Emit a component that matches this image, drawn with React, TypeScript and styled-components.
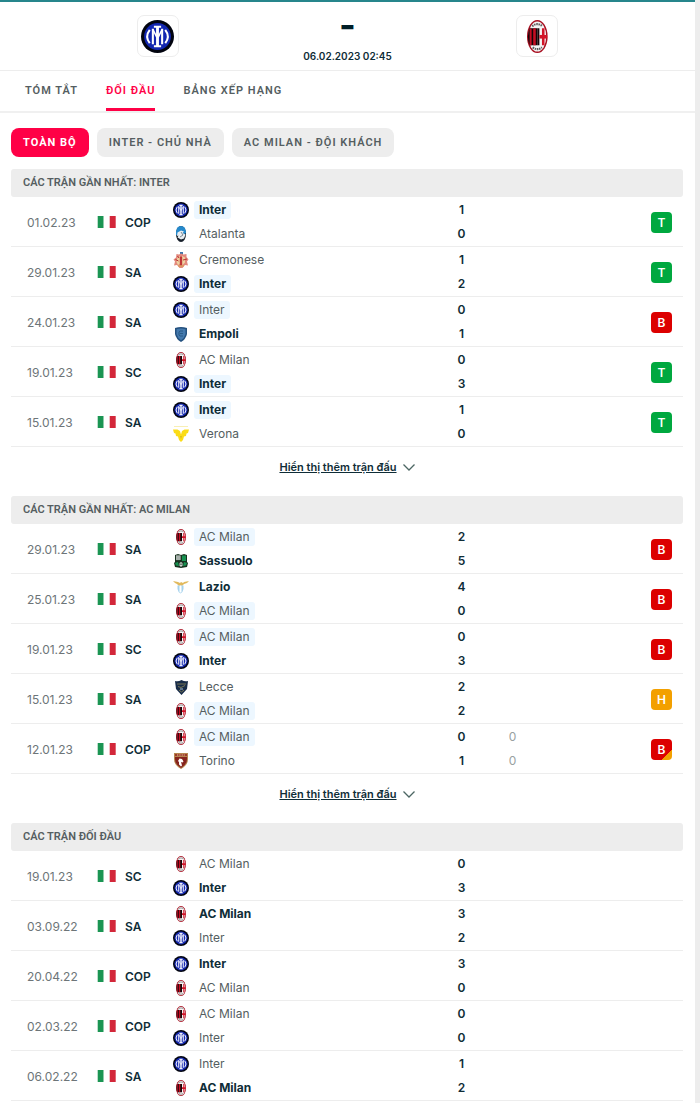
import React from 'react';
import styled, { createGlobalStyle, css } from 'styled-components';

const GlobalStyle = createGlobalStyle`
  * { box-sizing: border-box; }
  body {
    margin: 0;
    background: #ededed;
    color: #0f2d37;
    font-family: Inter, "Liberation Sans", sans-serif;
    font-size: 12px;
  }
`;

const capsFont = 'Roboto, Inter, sans-serif';

const Page = styled.main`
  margin-right: 5px;
  background: #fff;
  border-top: 2px solid #26868c;
  padding-bottom: 2px;
`;

const Header = styled.header`
  display: grid;
  grid-template-columns: repeat(3, 1fr);
  justify-items: center;
  padding: 13px 9%;
  border-bottom: 1px solid #ededed;
`;

const CrestBox = styled.div`
  display: grid;
  place-items: center;
  width: 42px;
  height: 42px;
  border: 1px solid #ededed;
  border-radius: 7px;
`;

const Kickoff = styled.div`
  display: flex;
  flex-direction: column;
  align-items: center;
  justify-content: space-between;
  height: 48px;
  margin-bottom: -6px;
`;

const Score = styled.div`
  font-size: 36px;
  font-weight: 700;
  line-height: 20px;
  color: #001e28;
`;

const StartTime = styled.time`
  font-size: 10px;
  font-weight: 600;
  line-height: 14px;
  white-space: nowrap;
`;

const Tabs = styled.nav`
  display: flex;
  gap: 28px;
  padding: 0 25px;
  border-bottom: 2px solid #f0f0f0;
`;

const Tab = styled.a<{ $active?: boolean }>`
  height: 40px;
  font-family: ${capsFont};
  font-size: 11px;
  font-weight: 600;
  line-height: 40px;
  letter-spacing: 1px;
  text-decoration: none;
  white-space: nowrap;
  color: ${p => (p.$active ? '#ff0046' : '#555e61')};
  ${p => p.$active && css`box-shadow: inset 0 -3px #ff0046;`}
`;

const Filters = styled.div`
  display: flex;
  gap: 8px;
  padding: 15px 11px 12px;
`;

const FilterButton = styled.button<{ $active?: boolean }>`
  height: 29px;
  padding: 0 12px;
  border: 0;
  border-radius: 8px;
  font-family: ${capsFont};
  font-size: 11px;
  font-weight: ${p => (p.$active ? 700 : 600)};
  letter-spacing: 1px;
  white-space: nowrap;
  color: ${p => (p.$active ? '#fff' : '#555e61')};
  background: ${p => (p.$active ? '#ff0046' : '#ededed')};
`;

const Section = styled.section`
  padding: 0 12px 0 11px;
`;

const SectionTitle = styled.h2`
  margin: 0;
  padding: 0 12px;
  border-radius: 3px;
  background: #ededed;
  color: #555e61;
  font-family: ${capsFont};
  font-size: 11px;
  font-weight: 600;
  line-height: 28px;
`;

const MatchTable = styled.table`
  width: 100%;
  table-layout: fixed;
  border-collapse: separate;
  border-spacing: 0;
`;

const DateCol = styled.col` width: 86px; `;
const LeagueCol = styled.col` width: 76px; `;
const ScoreCol = styled.col` width: 51px; `;
const ResultCol = styled.col` width: 145px; `;

const Cell = styled.td`
  height: 50px;
  padding: 1px 0 0;
  border-bottom: 1px solid #ededed;
  vertical-align: middle;
`;

const DateCell = styled(Cell)`
  padding-left: 16px;
  color: #6d7578;
`;

const ScoreCell = styled(Cell)<{ $muted?: boolean }>`
  text-align: center;
  font-weight: ${p => (p.$muted ? 400 : 600)};
  color: ${p => (p.$muted ? '#999fa1' : '#0f2d37')};
`;

const ResultCell = styled(Cell)`
  padding-right: 11px;
`;

const League = styled.div`
  display: flex;
  align-items: center;
  gap: 9px;
  font-weight: 600;
`;

const TeamLine = styled.div`
  display: flex;
  align-items: center;
  gap: 5px;
  height: 24px;
`;

const ScoreLine = styled.div`
  height: 24px;
  line-height: 24px;
`;

const TeamName = styled.span<{ $winner: boolean; $highlight: boolean }>`
  padding: 0 5px;
  border-radius: 3px;
  line-height: 18px;
  font-weight: ${p => (p.$winner ? 700 : 400)};
  color: ${p => (p.$winner ? '#0f2d37' : '#555e61')};
  background: ${p => (p.$highlight ? '#edf7ff' : 'transparent')};
`;

const badgeColors = { T: '#00a83f', B: '#dc0000', H: '#f3a000' };

const ResultBadge = styled.div<{ $result: Result; $extra?: boolean }>`
  width: 21px;
  height: 21px;
  margin-left: auto;
  border-radius: 4px;
  color: #fff;
  font-size: 12px;
  font-weight: 600;
  line-height: 21px;
  text-align: center;
  background: ${p =>
    p.$extra
      ? `linear-gradient(135deg, ${badgeColors[p.$result]} 75%, ${badgeColors.H} 75%)`
      : badgeColors[p.$result]};
`;

const MoreRow = styled.div`
  display: flex;
  justify-content: center;
  padding: 10px 0 19px;
`;

const MoreButton = styled.button`
  display: flex;
  align-items: center;
  gap: 6px;
  height: 20px;
  padding: 0;
  border: 0;
  background: none;
  color: #0f2d37;
  font-family: inherit;
  font-size: 11px;
  font-weight: 600;
  text-decoration: underline;
`;

const Slot = styled.span`
  display: grid;
  place-items: center;
  width: 16px;
  height: 18px;
`;

function InterCrest({ size }: { size: number }) {
  return (
    <svg width={size} height={size} viewBox="0 0 32 32" aria-hidden="true">
      <circle cx="16" cy="16" r="16" fill="#02040f" />
      <circle cx="16" cy="16" r="13" fill="#1226b0" />
      <g fill="none" stroke="#fff" strokeWidth="2">
        <path d="M16 6v20" strokeWidth="2.8" />
        <path d="M12.5 6.500h7M12.500 25.500h7" />
        <path d="M11.500 8.500v15M20.500 8.500v15" />
        <path d="M11.500 9l4 8M20.500 9l-4 8" strokeWidth="1.500" />
        <path d="M8.500 9.500q-5 6.500 0 13M23.500 9.500q5 6.500 0 13" />
      </g>
    </svg>
  );
}

function MilanCrest({ size }: { size: number }) {
  return (
    <svg width={(size * 20) / 32} height={size} viewBox="0 0 20 32" aria-hidden="true">
      <ellipse cx="10" cy="16" rx="10" ry="16" fill="#a80f20" />
      <ellipse cx="10" cy="16" rx="8.600" ry="14.600" fill="#f4f4f4" />
      <path d="M2.500 8H10v16.500H2.500Q-.8 16 2.500 8Z" fill="#160508" />
      <path d="M2.500 8.500h2v16h-2zM6 8h2.500v16.500H6z" fill="#c40d22" />
      <path d="M10 8h2v16.500h-2z" fill="#160508" />
      <path d="M14.500 8h2.500v16.500h-2.500z" fill="#d21428" />
      <path d="M12 14.500h7.500v3.500H12z" fill="#d21428" />
      <path d="M5 6q5-4 10 0M5.500 26.500q4.500 3.500 9 0" fill="none" stroke="#5b5b5b" strokeWidth="2" strokeDasharray="1.500 .7" />
    </svg>
  );
}

function AtalantaCrest() {
  return (
    <svg width="10" height="16" viewBox="0 0 10 16" aria-hidden="true">
      <ellipse cx="5" cy="8" rx="5" ry="8" fill="#17202b" />
      <path d="M0 9V6q.5-6 5-6t5 6v1L5 10Z" fill="#2589cc" />
      <path d="M1.500 6.500l3.500-2 3 1-1.500 1.500 3 1.500-1.500 4-3 1-3.500-2 1-2-1.500.5Z" fill="#e8edf1" />
      <path d="M5 6l2 3-3 2" fill="none" stroke="#61717d" strokeWidth=".8" />
    </svg>
  );
}

function CremoneseCrest() {
  return (
    <svg width="16" height="16" viewBox="0 0 16 16" aria-hidden="true">
      <path d="M7 0h3v3H7z" fill="#3d75aa" />
      <path d="M8 1.500l2.500 1 3-.5v3l2 2.500-1.500 2 1 4-3-.5L9.500 16h-3L4 13l-3 .5 1-4L.5 7.500 3 5.500 3.500 2l2.500.5Z" fill="#e2897d" />
      <path d="M4.500 5.500L7 4v8l-2 1-1.500-3ZM9 4l3 1.500v5L9 13.500Z" fill="#eed3a0" />
      <path d="M7.300 5h1.400v8H7.300zM2.500 7.500l3 1.500M10 8l4-1M4.500 4l1.500 2" fill="#bd3033" stroke="#bd3033" />
      <path d="M5 14h6" stroke="#d6a250" />
    </svg>
  );
}

function EmpoliCrest() {
  return (
    <svg width="12" height="15" viewBox="0 0 12 15" aria-hidden="true">
      <path d="M0 1q6-2 12 0v6q-1 5-6 8-5-3-6-8Z" fill="#24517f" />
      <path d="M1.500 2.200q4.500-1.400 9 0V7q-1 4-4.500 6.200Q2.500 11 1.500 7Z" fill="#4479ad" />
      <path d="M8 4H5L4 5v3l1 1h3M5 6.500h3" fill="none" stroke="#23547f" strokeWidth=".8" />
    </svg>
  );
}

function VeronaCrest() {
  return (
    <svg width="16" height="16" viewBox="0 0 16 16" aria-hidden="true">
      <path d="M1 .5h14" stroke="#f8efb5" />
      <path d="M0 3.500h4.500L7 5l1 3.500L9 5l2.500-1.500H16L15 7l-1.500.5-.5 2.500-2 .5L10 14l-2 2-2-2-1-3.500-2-.5-.5-2.500L1 7Z" fill="#fbdc16" />
      <path d="M7 10l1 3 1-3" fill="#d8bb1c" />
    </svg>
  );
}

function SassuoloCrest() {
  return (
    <svg width="14" height="14" viewBox="0 0 14 14" aria-hidden="true">
      <path d="M1 1l3-1 3 1 3-1 3 1v7l1 1-1 4-6 1-6-1-1-4 1-1Z" fill="#18311f" />
      <path d="M2 1.500h4.500V6H2z" fill="#dce2df" />
      <path d="M3 2v5M5 2v5" stroke="#46544b" strokeWidth=".7" />
      <path d="M8 1.500h4V7H8zM1 9l3-1 1 4-3-.5ZM13 9l-3-1-1 4 3-.5Z" fill="#169150" />
      <path d="M5.500 9l1.500-1 1.500 1v2.500L7 13l-1.500-1.500Z" fill="#cad5ce" />
      <path d="M6.500 9.500h1v1.500h-1z" fill="#18311f" />
    </svg>
  );
}

function LazioCrest() {
  return (
    <svg width="16" height="14" viewBox="0 0 16 14" aria-hidden="true">
      <path d="M0 1l5 1 2 1 1-1 2 1 1-1 5-1-2 2-3 1-2 2H6L4 4 2 3Z" fill="#e1b95c" />
      <path d="M4.500 5.500h6V9q-.5 3-3 4.500Q5 12 4.500 9Z" fill="#a5d2ed" />
      <path d="M6.500 5.500h2v6.500l-1 .8-1-.8Z" fill="#fff" />
    </svg>
  );
}

function LecceCrest() {
  return (
    <svg width="13" height="15" viewBox="0 0 13 15" aria-hidden="true">
      <path d="M0 1q3 1 6.500-1Q10 2 13 1l-1 8-5.500 6L1 9Z" fill="#182c49" />
      <path d="M2 4h9M3 6.500l3 1 4-2M4 10l2.500 2L9 10" fill="none" stroke="#a2965c" strokeWidth=".7" />
      <path d="M5 8h3v2H5z" fill="#61758d" />
    </svg>
  );
}

function TorinoCrest() {
  return (
    <svg width="14" height="16" viewBox="0 0 14 16" aria-hidden="true">
      <path d="M0 0h14v6q0 6-7 10Q0 12 0 6Z" fill="#b6854f" />
      <path d="M1 4h12v2q0 5.500-6 9-6-3.500-6-9Z" fill="#86231e" />
      <path d="M1 1h12v2H1z" fill="#9c3c2a" />
      <path d="M3 2h8" stroke="#e3c79d" strokeDasharray="1 .7" />
      <path d="M5.500 5.500l2.500.5 1.500 2.500-1 1-1.500-.5 1 3.500-1 1-2-2V9l-1-1Z" fill="#fff" />
    </svg>
  );
}

const crests: Record<string, React.ReactElement> = {
  Inter: <InterCrest size={16} />,
  'AC Milan': <MilanCrest size={16} />,
  Atalanta: <AtalantaCrest />,
  Cremonese: <CremoneseCrest />,
  Empoli: <EmpoliCrest />,
  Verona: <VeronaCrest />,
  Sassuolo: <SassuoloCrest />,
  Lazio: <LazioCrest />,
  Lecce: <LecceCrest />,
  Torino: <TorinoCrest />,
};

function ItalyFlag() {
  return (
    <svg width="19" height="12" viewBox="0 0 19 12" aria-hidden="true">
      <path d="M.7 0h6v12h-6z" fill="#1b9553" />
      <path d="M6.700 0h6v12h-6z" fill="#fff" />
      <path d="M12.700 0h6v12h-6z" fill="#d3273a" />
    </svg>
  );
}

function Chevron() {
  return (
    <svg width="12" height="7" viewBox="0 0 12 7" aria-hidden="true">
      <path d="M.5.500 6 6 11.500.500" fill="none" stroke="#4c6663" strokeWidth="1.300" />
    </svg>
  );
}

type Result = 'T' | 'B' | 'H';

interface Match {
  date: string;
  league: string;
  teams: [string, string];
  goals: [number, number];
  result?: Result;
  fullTime?: [number, number];
}

const interMatches: Match[] = [
  { date: '01.02.23', league: 'COP', teams: ['Inter', 'Atalanta'], goals: [1, 0], result: 'T' },
  { date: '29.01.23', league: 'SA', teams: ['Cremonese', 'Inter'], goals: [1, 2], result: 'T' },
  { date: '24.01.23', league: 'SA', teams: ['Inter', 'Empoli'], goals: [0, 1], result: 'B' },
  { date: '19.01.23', league: 'SC', teams: ['AC Milan', 'Inter'], goals: [0, 3], result: 'T' },
  { date: '15.01.23', league: 'SA', teams: ['Inter', 'Verona'], goals: [1, 0], result: 'T' },
];

const milanMatches: Match[] = [
  { date: '29.01.23', league: 'SA', teams: ['AC Milan', 'Sassuolo'], goals: [2, 5], result: 'B' },
  { date: '25.01.23', league: 'SA', teams: ['Lazio', 'AC Milan'], goals: [4, 0], result: 'B' },
  { date: '19.01.23', league: 'SC', teams: ['AC Milan', 'Inter'], goals: [0, 3], result: 'B' },
  { date: '15.01.23', league: 'SA', teams: ['Lecce', 'AC Milan'], goals: [2, 2], result: 'H' },
  { date: '12.01.23', league: 'COP', teams: ['AC Milan', 'Torino'], goals: [0, 1], result: 'B', fullTime: [0, 0] },
];

const headToHead: Match[] = [
  { date: '19.01.23', league: 'SC', teams: ['AC Milan', 'Inter'], goals: [0, 3] },
  { date: '03.09.22', league: 'SA', teams: ['AC Milan', 'Inter'], goals: [3, 2] },
  { date: '20.04.22', league: 'COP', teams: ['Inter', 'AC Milan'], goals: [3, 0] },
  { date: '02.03.22', league: 'COP', teams: ['AC Milan', 'Inter'], goals: [0, 0] },
  { date: '06.02.22', league: 'SA', teams: ['Inter', 'AC Milan'], goals: [1, 2] },
];

function MatchRow({ match, team }: { match: Match; team?: string }) {
  const { date, league, teams, goals, result, fullTime } = match;
  // A match level after full time has no winner in bold, whatever extra time brought.
  const decisive = fullTime ?? goals;
  return (
    <tr>
      <DateCell>{date}</DateCell>
      <Cell>
        <League><ItalyFlag />{league}</League>
      </Cell>
      <Cell>
        {teams.map((name, i) => (
          <TeamLine key={name}>
            <Slot>{crests[name]}</Slot>
            <TeamName $winner={decisive[i] > decisive[1 - i]} $highlight={name === team}>{name}</TeamName>
          </TeamLine>
        ))}
      </Cell>
      <ScoreCell>
        {goals.map((g, i) => <ScoreLine key={i}>{g}</ScoreLine>)}
      </ScoreCell>
      <ScoreCell $muted>
        {fullTime?.map((g, i) => <ScoreLine key={i}>{g}</ScoreLine>)}
      </ScoreCell>
      <ResultCell>
        {result && <ResultBadge $result={result} $extra={Boolean(fullTime)}>{result}</ResultBadge>}
      </ResultCell>
    </tr>
  );
}

function MatchSection({ title, matches, team }: { title: string; matches: Match[]; team?: string }) {
  return (
    <Section>
      <SectionTitle>{title}</SectionTitle>
      <MatchTable aria-label={title}>
        <colgroup>
          <DateCol />
          <LeagueCol />
          <col />
          <ScoreCol />
          <ScoreCol />
          <ResultCol />
        </colgroup>
        <tbody>
          {matches.map(m => <MatchRow key={m.date} match={m} team={team} />)}
        </tbody>
      </MatchTable>
      {team && (
        <MoreRow>
          <MoreButton type="button">Hiển thị thêm trận đấu<Chevron /></MoreButton>
        </MoreRow>
      )}
    </Section>
  );
}

export default function App() {
  return (
    <>
      <GlobalStyle />
      <Page>
        <Header>
          <CrestBox><InterCrest size={33} /></CrestBox>
          <Kickoff>
            <Score>-</Score>
            <StartTime>06.02.2023 02:45</StartTime>
          </Kickoff>
          <CrestBox><MilanCrest size={33} /></CrestBox>
        </Header>
        <Tabs>
          <Tab href="#summary">TÓM TẮT</Tab>
          <Tab href="#h2h" $active>ĐỐI ĐẦU</Tab>
          <Tab href="#standings">BẢNG XẾP HẠNG</Tab>
        </Tabs>
        <Filters>
          <FilterButton type="button" $active>TOÀN BỘ</FilterButton>
          <FilterButton type="button">INTER - CHỦ NHÀ</FilterButton>
          <FilterButton type="button">AC MILAN - ĐỘI KHÁCH</FilterButton>
        </Filters>
        <MatchSection title="CÁC TRẬN GẦN NHẤT: INTER" matches={interMatches} team="Inter" />
        <MatchSection title="CÁC TRẬN GẦN NHẤT: AC MILAN" matches={milanMatches} team="AC Milan" />
        <MatchSection title="CÁC TRẬN ĐỐI ĐẦU" matches={headToHead} />
      </Page>
    </>
  );
}
